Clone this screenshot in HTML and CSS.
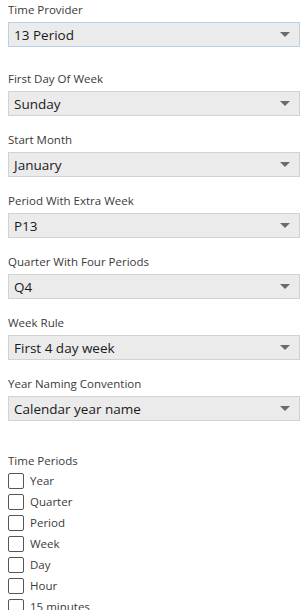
FILE: index.html
```html
<!DOCTYPE html>
<html lang="en">
<head>
  <meta charset="UTF-8">
  <title>Time Settings</title>
  <meta name="viewport" content="width=device-width, initial-scale=1.0">
  <link rel="stylesheet" href="styles.css">
</head>
<body>
  <div class="panel">
    <div class="field field-first">
      <label class="field-label">Time Provider</label>
      <div class="select select-focus">
        <span class="select-value">13 Period</span>
        <span class="select-arrow"></span>
      </div>
    </div>

    <div class="field">
      <label class="field-label">First Day Of Week</label>
      <div class="select">
        <span class="select-value">Sunday</span>
        <span class="select-arrow"></span>
      </div>
    </div>

    <div class="field">
      <label class="field-label">Start Month</label>
      <div class="select">
        <span class="select-value">January</span>
        <span class="select-arrow"></span>
      </div>
    </div>

    <div class="field">
      <label class="field-label">Period With Extra Week</label>
      <div class="select">
        <span class="select-value">P13</span>
        <span class="select-arrow"></span>
      </div>
    </div>

    <div class="field">
      <label class="field-label">Quarter With Four Periods</label>
      <div class="select">
        <span class="select-value">Q4</span>
        <span class="select-arrow"></span>
      </div>
    </div>

    <div class="field">
      <label class="field-label">Week Rule</label>
      <div class="select">
        <span class="select-value">First 4 day week</span>
        <span class="select-arrow"></span>
      </div>
    </div>

    <div class="field field-last">
      <label class="field-label">Year Naming Convention</label>
      <div class="select">
        <span class="select-value">Calendar year name</span>
        <span class="select-arrow"></span>
      </div>
    </div>

    <div class="periods">
      <div class="field-label">Time Periods</div>
      <label class="check"><span class="box"></span>Year</label>
      <label class="check"><span class="box"></span>Quarter</label>
      <label class="check"><span class="box"></span>Period</label>
      <label class="check"><span class="box"></span>Week</label>
      <label class="check"><span class="box"></span>Day</label>
      <label class="check"><span class="box"></span>Hour</label>
      <label class="check"><span class="box"></span>15 minutes</label>
    </div>
  </div>
</body>
</html>
```

FILE: styles.css
```css
* { box-sizing: border-box; }

body {
  margin: 0;
  padding: 0;
  background: #fff;
  font-family: 'Open Sans', 'Noto Sans', sans-serif;
  color: #333;
  overflow: hidden;
}

.panel {
  padding: 2px 4px 0 8px;
}

.field {
  margin-bottom: 16px;
}

.field-first {
  margin-bottom: 24px;
}

.field-last {
  margin-bottom: 32px;
}

.field-label {
  display: block;
  font-size: 11.5px;
  line-height: 16px;
  height: 16px;
  margin-bottom: 4px;
  color: #3a3a3a;
}

.select {
  display: flex;
  align-items: center;
  height: 25px;
  padding: 0 9px 0 5px;
  background: #ebebeb;
  border: 1px solid #d2d2d2;
}

.select-focus {
  border-color: #b9d1ea;
}

.select-value {
  flex: 1;
  font-size: 13.5px;
  color: #1a1a1a;
}

.select-arrow {
  width: 0;
  height: 0;
  border-left: 5px solid transparent;
  border-right: 5px solid transparent;
  border-top: 5px solid #6a6a6a;
}

.periods .field-label {
  margin-bottom: 1px;
}

.check {
  display: flex;
  align-items: center;
  height: 21px;
  font-size: 11.5px;
  color: #3a3a3a;
}

.check .box {
  width: 16px;
  height: 16px;
  margin-right: 6px;
  border: 1px solid #555;
  border-radius: 2px;
  background: #fff;
}
```
